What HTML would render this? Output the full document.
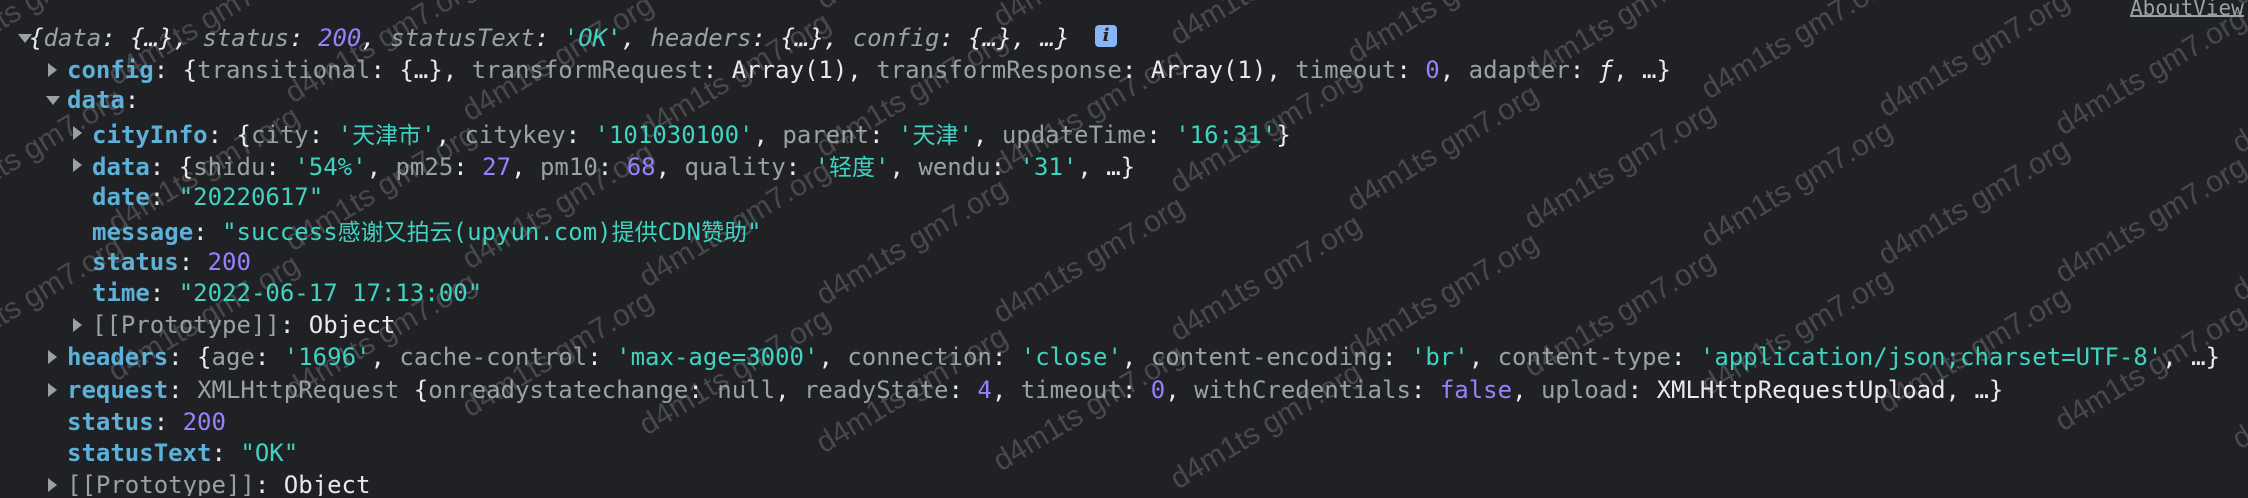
<!DOCTYPE html>
<html><head><meta charset="utf-8">
<style>
html,body{margin:0;padding:0;width:2248px;height:498px;overflow:hidden;}
body{background:#202124;position:relative;
font-family:"DejaVu Sans Mono","Liberation Mono","Noto Sans CJK SC",monospace;font-size:24px;color:#e8eaed;}
#wrap{position:absolute;left:0;top:0;width:2248px;height:498px;overflow:hidden;}
#wms{position:absolute;left:0;top:0;}
.l{position:absolute;white-space:pre;height:32px;line-height:32px;}
.k{color:#5db0d7;font-weight:bold;}
.g{color:#9aa0a6;}
.s{color:#3fd3c2;}
.n{color:#9980ff;}
.tri{position:absolute;width:0;height:0;}
.tr{border-top:7px solid transparent;border-bottom:7px solid transparent;border-left:9px solid #9aa0a6;}
.td{border-left:7px solid transparent;border-right:7px solid transparent;border-top:9px solid #9aa0a6;}
.i{font-style:italic;}
.cjk{font-family:"Noto Sans CJK SC",sans-serif;font-size:23px;}
</style></head><body>
<div id="wrap">
<svg id="wms" width="2248" height="498" viewBox="0 0 2248 498" style="overflow:hidden"></svg>

<div class="tri td" style="left:18px;top:34px"></div>
<div class="l i" style="left:29px;top:22px">{<span class="g">data</span>: {…}, <span class="g">status</span>: <span class="n">200</span>, <span class="g">statusText</span>: <span class="s">'OK'</span>, <span class="g">headers</span>: {…}, <span class="g">config</span>: {…}, …}</div>
<div style="position:absolute;left:1095px;top:25px;width:22px;height:22px;border-radius:4px;background:#8ab4f8;color:#202124;font:bold italic 18px 'DejaVu Serif',serif;text-align:center;line-height:22px;">i</div>

<div class="tri tr" style="left:48px;top:63px"></div>
<div class="l" style="left:67px;top:54px"><span class="k">config</span>: {<span class="g">transitional</span>: {…}, <span class="g">transformRequest</span>: Array(1), <span class="g">transformResponse</span>: Array(1), <span class="g">timeout</span>: <span class="n">0</span>, <span class="g">adapter</span>: <span class="i">ƒ</span>, …}</div>

<div class="tri td" style="left:46px;top:96px"></div>
<div class="l" style="left:67px;top:84px"><span class="k">data</span>:</div>

<div class="tri tr" style="left:73px;top:126px"></div>
<div class="l" style="left:92px;top:117px"><span class="k">cityInfo</span>: {<span class="g">city</span>: <span class="s">'<span class="cjk">天津市</span>'</span>, <span class="g">citykey</span>: <span class="s">'101030100'</span>, <span class="g">parent</span>: <span class="s">'<span class="cjk">天津</span>'</span>, <span class="g">updateTime</span>: <span class="s">'16:31'</span>}</div>

<div class="tri tr" style="left:73px;top:158px"></div>
<div class="l" style="left:92px;top:149px"><span class="k">data</span>: {<span class="g">shidu</span>: <span class="s">'54%'</span>, <span class="g">pm25</span>: <span class="n">27</span>, <span class="g">pm10</span>: <span class="n">68</span>, <span class="g">quality</span>: <span class="s">'<span class="cjk">轻度</span>'</span>, <span class="g">wendu</span>: <span class="s">'31'</span>, …}</div>

<div class="l" style="left:92px;top:181px"><span class="k">date</span>: <span class="s">"20220617"</span></div>
<div class="l" style="left:92px;top:214px"><span class="k">message</span>: <span class="s">"success<span class="cjk">感谢又拍云</span>(upyun.com)<span class="cjk">提供</span>CDN<span class="cjk">赞助</span>"</span></div>
<div class="l" style="left:92px;top:246px"><span class="k">status</span>: <span class="n">200</span></div>
<div class="l" style="left:92px;top:277px"><span class="k">time</span>: <span class="s">"2022-06-17 17:13:00"</span></div>

<div class="tri tr" style="left:73px;top:318px"></div>
<div class="l" style="left:92px;top:309px"><span class="g">[[Prototype]]</span>: Object</div>

<div class="tri tr" style="left:48px;top:350px"></div>
<div class="l" style="left:67px;top:341px"><span class="k">headers</span>: {<span class="g">age</span>: <span class="s">'1696'</span>, <span class="g">cache-control</span>: <span class="s">'max-age=3000'</span>, <span class="g">connection</span>: <span class="s">'close'</span>, <span class="g">content-encoding</span>: <span class="s">'br'</span>, <span class="g">content-type</span>: <span class="s">'application/json;charset=UTF-8'</span>, …}</div>

<div class="tri tr" style="left:48px;top:383px"></div>
<div class="l" style="left:67px;top:374px"><span class="k">request</span>: <span class="g">XMLHttpRequest</span> {<span class="g">onreadystatechange</span>: <span class="g">null</span>, <span class="g">readyState</span>: <span class="n">4</span>, <span class="g">timeout</span>: <span class="n">0</span>, <span class="g">withCredentials</span>: <span class="n">false</span>, <span class="g">upload</span>: XMLHttpRequestUpload, …}</div>

<div class="l" style="left:67px;top:406px"><span class="k">status</span>: <span class="n">200</span></div>
<div class="l" style="left:67px;top:437px"><span class="k">statusText</span>: <span class="s">"OK"</span></div>

<div class="tri tr" style="left:48px;top:478px"></div>
<div class="l" style="left:67px;top:468px;height:28px;line-height:34px;overflow:hidden"><span class="g">[[Prototype]]</span>: Object</div>

<div style="position:absolute;left:2130px;top:0px;font-size:21px;color:#9aa0a6;white-space:nowrap;line-height:16px;height:15px;overflow:hidden;border-bottom:2px solid #9aa0a6;">AboutView</div>
</div>
<script>
var c=document.getElementById('wms'),h='';
for(var i=-14;i<=14;i++){for(var j=-6;j<=6;j++){
var x=650+177*i,y=293+18*i+148*j;
if(x<-300||x>2300||y<0||y>495)continue;
h+='<text x="'+x+'" y="'+(y-6)+'" transform="rotate(-31 '+x+' '+y+')" font-family="Liberation Sans, sans-serif" font-size="30" fill="#48494c">d4m1ts gm7.org</text>';}}
c.innerHTML=h;
</script>
</body></html>
